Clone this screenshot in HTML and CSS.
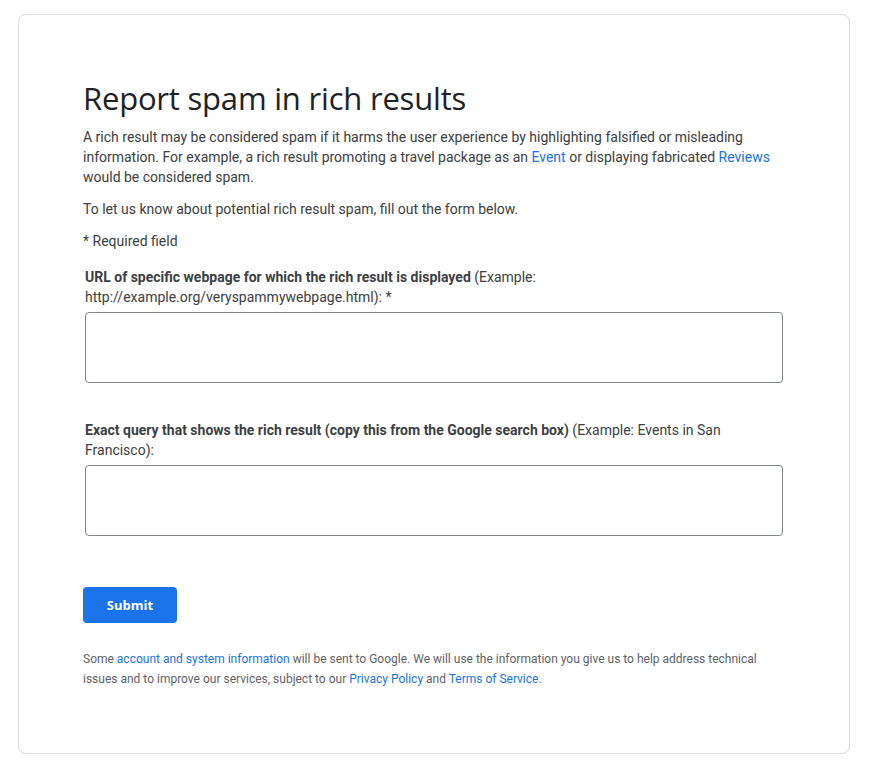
FILE: index.html
```html
<!DOCTYPE html>
<html lang="en">
<head>
<meta charset="utf-8">
<title>Report spam in rich results</title>
<link rel="stylesheet" href="styles.css">
</head>
<body>
<main class="card">
  <h1 class="title">Report spam in rich results</h1>
  <p class="text intro">A rich result may be considered spam if it harms the user experience by highlighting falsified or misleading information. For example, a rich result promoting a travel package as an <a href="#" class="link">Event</a> or displaying fabricated <a href="#" class="link">Reviews</a> would be considered spam.</p>
  <p class="text gap">To let us know about potential rich result spam, fill out the form below.</p>
  <p class="text gap">* Required field</p>
  <form class="form">
    <label class="label label-first" for="url"><b>URL of specific webpage for which the rich result is displayed</b> (Example: http://example.org/veryspammywebpage.html): *</label>
    <textarea id="url" class="field"></textarea>
    <label class="label label-next" for="query"><b>Exact query that shows the rich result (copy this from the Google search box)</b> (Example: Events in San Francisco):</label>
    <textarea id="query" class="field"></textarea>
  </form>
  <button class="submit" type="button">Submit</button>
  <p class="footer">Some <a href="#" class="link">account and system information</a> will be sent to Google. We will use the information you give us to help address technical issues and to improve our services, subject to our <a href="#" class="link">Privacy Policy</a> and <a href="#" class="link">Terms of Service</a>.</p>
</main>
</body>
</html>
```
FILE: styles.css
```css
html, body {
  margin: 0;
  padding: 0;
  background: #ffffff;
}
body {
  font-family: Roboto, "Liberation Sans", Arial, sans-serif;
  color: #3c4043;
}
.card {
  box-sizing: border-box;
  width: 832px;
  height: 740px;
  margin: 14px 0 0 18px;
  border: 1px solid #dadce0;
  border-radius: 8px;
  padding: 63px 67px 0 64px;
}
.title {
  margin: 0;
  font-family: "Open Sans", Roboto, sans-serif;
  font-weight: 400;
  font-size: 31px;
  line-height: 40px;
  color: #202124;
  letter-spacing: -0.2px;
}
.text {
  margin: 12px 0 0;
  font-size: 14px;
  line-height: 20px;
}
.intro {
  margin-top: 9px;
}
.link {
  color: #1a73e8;
  text-decoration: none;
}
.form {
  display: flex;
  flex-direction: column;
  padding-left: 2px;
}
.label {
  font-size: 14px;
  line-height: 20px;
  color: #3c4043;
}
.label b {
  font-weight: 700;
}
.label-first {
  margin-top: 16px;
}
.label-next {
  margin-top: 37px;
}
.field {
  box-sizing: border-box;
  margin: 5px 0 0;
  width: 698px;
  height: 71px;
  border: 1px solid #80868b;
  border-radius: 4px;
  resize: none;
  font-family: Roboto, sans-serif;
  font-size: 14px;
  padding: 8px;
}
.submit {
  display: block;
  margin-top: 51px;
  width: 94px;
  height: 36px;
  border: none;
  border-radius: 4px;
  background: #1a73e8;
  color: #ffffff;
  font-family: "Open Sans", Roboto, sans-serif;
  font-weight: 700;
  font-size: 13px;
  padding: 0;
}
.footer {
  margin: 26px 0 0;
  font-size: 12px;
  line-height: 20px;
  color: #5f6368;
}
```
